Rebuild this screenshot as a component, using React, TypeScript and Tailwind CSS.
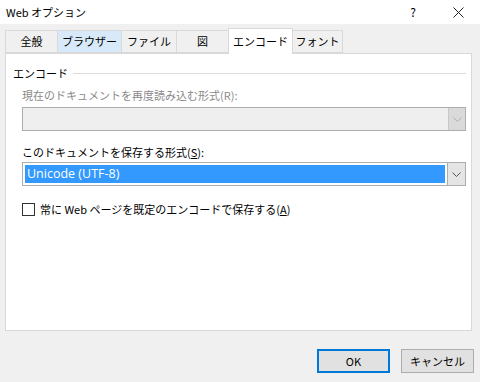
import React from 'react'

const font = { fontFamily: '"Noto Sans CJK JP", "Noto Sans", sans-serif' }

function Chevron({ color }: { color: string }) {
    return (
        <svg width="9" height="5" viewBox="0 0 9 5">
            <path d="M0.5 0.5 L4.5 4.5 L8.5 0.5" fill="none" stroke={color} strokeWidth="1" />
        </svg>
    )
}

function Tab({ label, w, active, hover }: { label: string; w: string; active?: boolean; hover?: boolean }) {
    if (active) {
        return (
            <div className={`${w} h-[26px] -mb-px bg-white border border-b-0 border-[#d9d9d9] flex items-center justify-center text-[11px] leading-none text-black relative z-10`}>
                {label}
            </div>
        )
    }
    return (
        <div
            className={`${w} h-[23px] border border-r-0 border-[#d9d9d9] flex items-center justify-center text-[11px] leading-none text-black ${hover ? 'bg-[#d8eaf9]' : 'bg-[#f0f0f0]'}`}
        >
            {label}
        </div>
    )
}

export default function App() {
    return (
        <div className="w-[480px] h-[382px] bg-[#f0f0f0] flex flex-col overflow-hidden" style={font}>
            <div className="h-[24px] bg-white flex items-center text-[11px] leading-none text-black">
                <div className="pl-[6px] flex-1">Web オプション</div>
                <div className="w-[14px] text-center mr-[33px] text-[12px]">?</div>
                <svg width="11" height="11" viewBox="0 0 11 11" className="mr-[16px]">
                    <path d="M0.5 0.5 L10.5 10.5 M10.5 0.5 L0.5 10.5" stroke="#222" strokeWidth="1" />
                </svg>
            </div>

            <div className="flex items-end h-[29px] pl-[5px]">
                <Tab label="全般" w="w-[52px]" />
                <Tab label="ブラウザー" w="w-[64px]" hover />
                <Tab label="ファイル" w="w-[55px]" />
                <Tab label="図" w="w-[52px]" />
                <Tab label="エンコード" w="w-[65px]" active />
                <div className="w-[50px] h-[23px] border border-l-0 border-[#d9d9d9] flex items-center justify-center text-[11px] leading-none text-black">
                    フォント
                </div>
            </div>

            <div className="ml-[5px] w-[467px] h-[278px] bg-white border border-[#d9d9d9] flex flex-col pl-[7px] pr-[5px] text-[11px] leading-none">
                <div className="flex items-center gap-[5px] mt-[12px] h-[14px]">
                    <span className="text-black">エンコード</span>
                    <div className="flex-1 h-px bg-[#dcdcdc]" />
                </div>

                <div className="pl-[9px] mt-[10px] text-[#8a8a8a]">現在のドキュメントを再度読み込む形式(R):</div>
                <div className="ml-[9px] mt-[6px] h-[24px] border border-[#adadad] bg-[#efefef] flex">
                    <div className="flex-1" />
                    <div className="w-[17px] bg-[#dadada] border-l border-[#c8c8c8] flex items-center justify-center">
                        <Chevron color="#b0b0b0" />
                    </div>
                </div>

                <div className="pl-[9px] mt-[16px] text-black">
                    このドキュメントを保存する形式(<span className="underline">S</span>):
                </div>
                <div className="ml-[9px] mt-[4px] h-[24px] border border-[#adadad] bg-white flex p-[2px] pr-0">
                    <div className="flex-1 bg-[#3399ff] text-white flex items-center pl-[2px] text-[12.5px]" style={{ fontFamily: '"Open Sans", "Noto Sans", sans-serif' }}>
                        Unicode (UTF-8)
                    </div>
                    <div className="w-[18px] -my-[2px] ml-[2px] bg-[#e5e5e5] border-l border-[#adadad] flex items-center justify-center">
                        <Chevron color="#555" />
                    </div>
                </div>

                <div className="ml-[9px] mt-[17px] flex items-center gap-[5px]">
                    <div className="w-[13px] h-[13px] border border-[#333] bg-white" />
                    <span className="text-black">
                        常に Web ページを既定のエンコードで保存する(<span className="underline">A</span>)
                    </span>
                </div>
            </div>

            <div className="flex justify-end gap-[11px] pr-[6px] mt-[18px]">
                <div className="w-[73px] h-[24px] bg-[#e1e1e1] border-2 border-[#0078d7] flex items-center justify-center text-[11px] leading-none text-black">
                    OK
                </div>
                <div className="w-[73px] h-[24px] bg-[#e1e1e1] border border-[#adadad] flex items-center justify-center text-[11px] leading-none text-black">
                    キャンセル
                </div>
            </div>
        </div>
    )
}
